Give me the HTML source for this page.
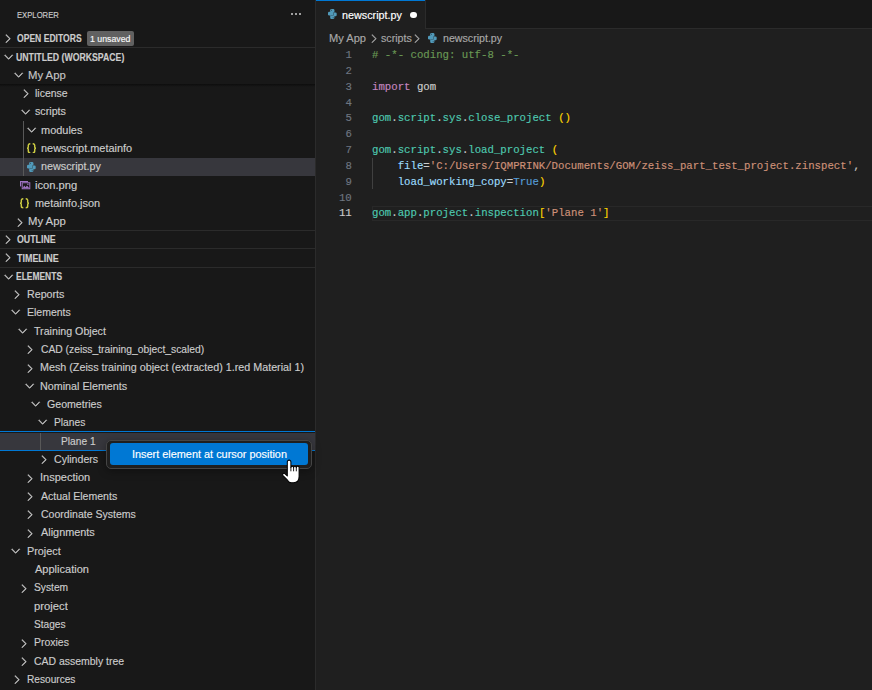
<!DOCTYPE html><html><head><meta charset="utf-8"><style>html,body{margin:0;padding:0;width:872px;height:690px;overflow:hidden;background:#181818;}.t{position:absolute;white-space:pre;line-height:1;}.r{position:absolute;}</style></head><body>
<div class="r" style="left:316.00px;top:0.00px;width:556.00px;height:690.00px;background:#1f1f1f;"></div>
<div class="r" style="left:316.00px;top:0.00px;width:556.00px;height:29.17px;background:#181818;"></div>
<div class="r" style="left:425.00px;top:28.17px;width:447.00px;height:1.00px;background:#2b2b2b;"></div>
<div class="r" style="left:316.00px;top:0.00px;width:109.50px;height:29.17px;background:#1f1f1f;"></div>
<div class="r" style="left:316.00px;top:0.00px;width:109.50px;height:1.20px;background:#0078d4;"></div>
<div class="r" style="left:425.00px;top:0.00px;width:1.00px;height:29.17px;background:#2b2b2b;"></div>
<div class="r" style="left:315.00px;top:0.00px;width:1.00px;height:690.00px;background:#2b2b2b;"></div>
<div class="t" style="left:16.75px;top:10.09px;font-size:9.7px;color:#cccccc;font-weight:normal;font-family:'Liberation Sans', sans-serif;transform:scaleX(0.7927);transform-origin:0 0;-webkit-text-stroke:0.15px currentColor;">EXPLORER</div>
<div class="r" style="left:291.35px;top:13.25px;width:2.10px;height:2.10px;background:#cccccc;border-radius:50%;"></div>
<div class="r" style="left:295.35px;top:13.25px;width:2.10px;height:2.10px;background:#cccccc;border-radius:50%;"></div>
<div class="r" style="left:299.35px;top:13.25px;width:2.10px;height:2.10px;background:#cccccc;border-radius:50%;"></div>
<svg class="r" style="left:1.24px;top:31.87px" width="13.33" height="13.33" viewBox="0 0 16 16"><path fill="#cccccc" stroke="#cccccc" stroke-width="0.6" d="M10.072 8.024L5.715 3.667l.618-.62L11 7.716v.618L6.333 13l-.618-.619 4.357-4.357z"/></svg>
<div class="t" style="left:16.66px;top:34.13px;font-size:10.0px;color:#cccccc;font-weight:bold;font-family:'Liberation Sans', sans-serif;transform:scaleX(0.8577);transform-origin:0 0;-webkit-text-stroke:0.15px currentColor;">OPEN EDITORS</div>
<div class="r" style="left:87.00px;top:31.00px;width:47.00px;height:15.00px;background:#616161;border-radius:2px;"></div>
<div class="t" style="left:90.06px;top:34.17px;font-size:9.6px;color:#f8f8f8;font-weight:normal;font-family:'Liberation Sans', sans-serif;transform:scaleX(0.9126);transform-origin:0 0;-webkit-text-stroke:0.15px currentColor;">1 unsaved</div>
<div class="r" style="left:0.00px;top:47.00px;width:315.00px;height:1.00px;background:#2b2b2b;"></div>
<svg class="r" style="left:1.60px;top:49.50px" width="13.33" height="13.33" viewBox="0 0 16 16"><path fill="#cccccc" stroke="#cccccc" stroke-width="0.6" d="M7.976 10.072l4.357-4.357.62.618L8.284 11h-.618L3 6.333l.619-.618 4.357 4.357z"/></svg>
<div class="t" style="left:16.48px;top:53.03px;font-size:10.0px;color:#cccccc;font-weight:bold;font-family:'Liberation Sans', sans-serif;transform:scaleX(0.8716);transform-origin:0 0;-webkit-text-stroke:0.15px currentColor;">UNTITLED (WORKSPACE)</div>
<div class="r" style="left:0.00px;top:157.50px;width:315.00px;height:18.33px;background:#37373d;"></div>
<div class="r" style="left:23.30px;top:120.83px;width:1.00px;height:55.00px;background:#585858;"></div>
<div class="r" style="left:0.00px;top:84.16px;width:315.00px;height:3.00px;background:linear-gradient(#0d0d0d,rgba(24,24,24,0));"></div>
<svg class="r" style="left:11.70px;top:67.83px" width="13.33" height="13.33" viewBox="0 0 16 16"><path fill="#cccccc" stroke="#cccccc" stroke-width="0.6" d="M7.976 10.072l4.357-4.357.62.618L8.284 11h-.618L3 6.333l.619-.618 4.357 4.357z"/></svg>
<div class="t" style="left:27.85px;top:69.66px;font-size:10.6px;color:#c4c4c4;font-weight:normal;font-family:'Liberation Sans', sans-serif;transform:scaleX(1.0679);transform-origin:0 0;-webkit-text-stroke:0.15px currentColor;">My App</div>
<svg class="r" style="left:19.44px;top:87.46px" width="13.33" height="13.33" viewBox="0 0 16 16"><path fill="#cccccc" stroke="#cccccc" stroke-width="0.6" d="M10.072 8.024L5.715 3.667l.618-.62L11 7.716v.618L6.333 13l-.618-.619 4.357-4.357z"/></svg>
<div class="t" style="left:34.81px;top:87.99px;font-size:10.6px;color:#cccccc;font-weight:normal;font-family:'Liberation Sans', sans-serif;transform:scaleX(0.9874);transform-origin:0 0;-webkit-text-stroke:0.15px currentColor;">license</div>
<svg class="r" style="left:18.50px;top:104.50px" width="13.33" height="13.33" viewBox="0 0 16 16"><path fill="#cccccc" stroke="#cccccc" stroke-width="0.6" d="M7.976 10.072l4.357-4.357.62.618L8.284 11h-.618L3 6.333l.619-.618 4.357 4.357z"/></svg>
<div class="t" style="left:34.80px;top:106.32px;font-size:10.6px;color:#cccccc;font-weight:normal;font-family:'Liberation Sans', sans-serif;transform:scaleX(1.0091);transform-origin:0 0;-webkit-text-stroke:0.15px currentColor;">scripts</div>
<svg class="r" style="left:24.50px;top:122.83px" width="13.33" height="13.33" viewBox="0 0 16 16"><path fill="#cccccc" stroke="#cccccc" stroke-width="0.6" d="M7.976 10.072l4.357-4.357.62.618L8.284 11h-.618L3 6.333l.619-.618 4.357 4.357z"/></svg>
<div class="t" style="left:41.18px;top:124.66px;font-size:10.6px;color:#cccccc;font-weight:normal;font-family:'Liberation Sans', sans-serif;transform:scaleX(1.0342);transform-origin:0 0;-webkit-text-stroke:0.15px currentColor;">modules</div>
<div class="t" style="left:41.18px;top:142.99px;font-size:10.6px;color:#cccccc;font-weight:normal;font-family:'Liberation Sans', sans-serif;transform:scaleX(1.0324);transform-origin:0 0;-webkit-text-stroke:0.15px currentColor;">newscript.metainfo</div>
<svg class="r" style="left:26.80px;top:142.96px" width="9.5" height="10.5" viewBox="0 0 9.5 10.5"><g fill="none" stroke="#cbcb41" stroke-width="1.45" stroke-linejoin="round"><path d="M3.3 0.7 Q1.3 0.7 1.3 2.2 V4.1 Q1.3 5.1 0.3 5.25 Q1.3 5.4 1.3 6.4 V8.3 Q1.3 9.8 3.3 9.8"/><path d="M5.7 0.7 Q7.7 0.7 7.7 2.2 V4.1 Q7.7 5.1 8.9 5.25 Q7.7 5.4 7.7 6.4 V8.3 Q7.7 9.8 5.7 9.8"/></g></svg>
<div class="t" style="left:41.19px;top:161.32px;font-size:10.6px;color:#cccccc;font-weight:normal;font-family:'Liberation Sans', sans-serif;transform:scaleX(1.0187);transform-origin:0 0;-webkit-text-stroke:0.15px currentColor;">newscript.py</div>
<svg class="r" style="left:26.90px;top:161.70px" width="9.00" height="10.00" viewBox="0 0 9 10"><g fill="#519aba"><rect x="2.2" y="0" width="4.2" height="4.2" rx="1.2"/><rect x="0" y="2.7" width="5.8" height="3.7" rx="1.2"/><rect x="2.8" y="3.6" width="5.9" height="3.7" rx="1.2"/><rect x="2.2" y="5.8" width="4.2" height="4.2" rx="1.2"/></g><g fill="#1f1f1f" opacity="0.55"><rect x="3" y="0.8" width="1" height="1"/><rect x="4.7" y="8.2" width="1" height="1"/><path d="M2.8 6.4 L5.8 6.4 L5.8 3.6 L6.4 3.6 L6.4 3.3 L5.2 3.3 L5.2 6 L2.8 6 Z"/></g></svg>
<div class="t" style="left:34.76px;top:179.66px;font-size:10.6px;color:#cccccc;font-weight:normal;font-family:'Liberation Sans', sans-serif;transform:scaleX(1.0546);transform-origin:0 0;-webkit-text-stroke:0.15px currentColor;">icon.png</div>
<svg class="r" style="left:19.60px;top:181.03px" width="11" height="9.5" viewBox="0 0 11 9.5"><g fill="#a074c4"><rect x="0" y="0" width="8" height="1.1"/><rect x="0" y="0" width="1.1" height="5.4"/><path fill-rule="evenodd" d="M1.7 1.2 H10.3 V8.3 H1.7 Z M2.7 2.2 V7.3 H9.3 V2.2 Z"/><path d="M2.7 7.3 L4.2 4.6 L5.6 6.2 L7.0 4.4 L9.3 7.3 Z"/><circle cx="7.9" cy="3.3" r="0.75"/></g></svg>
<div class="t" style="left:34.78px;top:197.99px;font-size:10.6px;color:#cccccc;font-weight:normal;font-family:'Liberation Sans', sans-serif;transform:scaleX(1.0332);transform-origin:0 0;-webkit-text-stroke:0.15px currentColor;">metainfo.json</div>
<svg class="r" style="left:19.90px;top:198.06px" width="9.5" height="10.5" viewBox="0 0 9.5 10.5"><g fill="none" stroke="#cbcb41" stroke-width="1.45" stroke-linejoin="round"><path d="M3.3 0.7 Q1.3 0.7 1.3 2.2 V4.1 Q1.3 5.1 0.3 5.25 Q1.3 5.4 1.3 6.4 V8.3 Q1.3 9.8 3.3 9.8"/><path d="M5.7 0.7 Q7.7 0.7 7.7 2.2 V4.1 Q7.7 5.1 8.9 5.25 Q7.7 5.4 7.7 6.4 V8.3 Q7.7 9.8 5.7 9.8"/></g></svg>
<svg class="r" style="left:12.64px;top:215.80px" width="13.33" height="13.33" viewBox="0 0 16 16"><path fill="#cccccc" stroke="#cccccc" stroke-width="0.6" d="M10.072 8.024L5.715 3.667l.618-.62L11 7.716v.618L6.333 13l-.618-.619 4.357-4.357z"/></svg>
<div class="t" style="left:27.85px;top:216.32px;font-size:10.6px;color:#cccccc;font-weight:normal;font-family:'Liberation Sans', sans-serif;transform:scaleX(1.0679);transform-origin:0 0;-webkit-text-stroke:0.15px currentColor;">My App</div>
<div class="r" style="left:0.00px;top:230.00px;width:315.00px;height:1.00px;background:#2b2b2b;"></div>
<svg class="r" style="left:1.24px;top:232.70px" width="13.33" height="13.33" viewBox="0 0 16 16"><path fill="#cccccc" stroke="#cccccc" stroke-width="0.6" d="M10.072 8.024L5.715 3.667l.618-.62L11 7.716v.618L6.333 13l-.618-.619 4.357-4.357z"/></svg>
<div class="t" style="left:16.65px;top:235.24px;font-size:10.0px;color:#cccccc;font-weight:bold;font-family:'Liberation Sans', sans-serif;transform:scaleX(0.8813);transform-origin:0 0;-webkit-text-stroke:0.15px currentColor;">OUTLINE</div>
<div class="r" style="left:0.00px;top:248.00px;width:315.00px;height:1.00px;background:#2b2b2b;"></div>
<svg class="r" style="left:1.24px;top:250.70px" width="13.33" height="13.33" viewBox="0 0 16 16"><path fill="#cccccc" stroke="#cccccc" stroke-width="0.6" d="M10.072 8.024L5.715 3.667l.618-.62L11 7.716v.618L6.333 13l-.618-.619 4.357-4.357z"/></svg>
<div class="t" style="left:16.91px;top:254.34px;font-size:10.0px;color:#cccccc;font-weight:bold;font-family:'Liberation Sans', sans-serif;transform:scaleX(0.8940);transform-origin:0 0;-webkit-text-stroke:0.15px currentColor;">TIMELINE</div>
<div class="r" style="left:0.00px;top:267.00px;width:315.00px;height:1.00px;background:#2b2b2b;"></div>
<svg class="r" style="left:1.60px;top:269.50px" width="13.33" height="13.33" viewBox="0 0 16 16"><path fill="#cccccc" stroke="#cccccc" stroke-width="0.6" d="M7.976 10.072l4.357-4.357.62.618L8.284 11h-.618L3 6.333l.619-.618 4.357 4.357z"/></svg>
<div class="t" style="left:16.49px;top:272.44px;font-size:10.0px;color:#cccccc;font-weight:bold;font-family:'Liberation Sans', sans-serif;transform:scaleX(0.8452);transform-origin:0 0;-webkit-text-stroke:0.15px currentColor;">ELEMENTS</div>
<div class="r" style="left:0.00px;top:432.50px;width:315.00px;height:18.33px;background:#37373d;"></div>
<div class="r" style="left:0.00px;top:431.30px;width:315.00px;height:1.20px;background:#0078d4;"></div>
<div class="r" style="left:0.00px;top:449.63px;width:315.00px;height:1.20px;background:#0078d4;"></div>
<div class="r" style="left:40.30px;top:432.50px;width:1.00px;height:17.13px;background:#585858;"></div>
<svg class="r" style="left:9.80px;top:288.33px" width="13.33" height="13.33" viewBox="0 0 16 16"><path fill="#cccccc" stroke="#cccccc" stroke-width="0.6" d="M10.072 8.024L5.715 3.667l.618-.62L11 7.716v.618L6.333 13l-.618-.619 4.357-4.357z"/></svg>
<div class="t" style="left:26.99px;top:288.86px;font-size:10.6px;color:#cccccc;font-weight:normal;font-family:'Liberation Sans', sans-serif;transform:scaleX(1.0079);transform-origin:0 0;-webkit-text-stroke:0.15px currentColor;">Reports</div>
<svg class="r" style="left:9.20px;top:305.36px" width="13.33" height="13.33" viewBox="0 0 16 16"><path fill="#cccccc" stroke="#cccccc" stroke-width="0.6" d="M7.976 10.072l4.357-4.357.62.618L8.284 11h-.618L3 6.333l.619-.618 4.357 4.357z"/></svg>
<div class="t" style="left:27.01px;top:307.19px;font-size:10.6px;color:#cccccc;font-weight:normal;font-family:'Liberation Sans', sans-serif;transform:scaleX(0.9910);transform-origin:0 0;-webkit-text-stroke:0.15px currentColor;">Elements</div>
<svg class="r" style="left:15.90px;top:323.70px" width="13.33" height="13.33" viewBox="0 0 16 16"><path fill="#cccccc" stroke="#cccccc" stroke-width="0.6" d="M7.976 10.072l4.357-4.357.62.618L8.284 11h-.618L3 6.333l.619-.618 4.357 4.357z"/></svg>
<div class="t" style="left:34.30px;top:325.52px;font-size:10.6px;color:#cccccc;font-weight:normal;font-family:'Liberation Sans', sans-serif;transform:scaleX(1.0065);transform-origin:0 0;-webkit-text-stroke:0.15px currentColor;">Training Object</div>
<svg class="r" style="left:23.20px;top:343.33px" width="13.33" height="13.33" viewBox="0 0 16 16"><path fill="#cccccc" stroke="#cccccc" stroke-width="0.6" d="M10.072 8.024L5.715 3.667l.618-.62L11 7.716v.618L6.333 13l-.618-.619 4.357-4.357z"/></svg>
<div class="t" style="left:40.71px;top:343.86px;font-size:10.6px;color:#cccccc;font-weight:normal;font-family:'Liberation Sans', sans-serif;transform:scaleX(0.9725);transform-origin:0 0;-webkit-text-stroke:0.15px currentColor;">CAD (zeiss_training_object_scaled)</div>
<svg class="r" style="left:23.20px;top:361.66px" width="13.33" height="13.33" viewBox="0 0 16 16"><path fill="#cccccc" stroke="#cccccc" stroke-width="0.6" d="M10.072 8.024L5.715 3.667l.618-.62L11 7.716v.618L6.333 13l-.618-.619 4.357-4.357z"/></svg>
<div class="t" style="left:40.39px;top:362.19px;font-size:10.6px;color:#cccccc;font-weight:normal;font-family:'Liberation Sans', sans-serif;transform:scaleX(1.0144);transform-origin:0 0;-webkit-text-stroke:0.15px currentColor;">Mesh (Zeiss training object (extracted) 1.red Material 1)</div>
<svg class="r" style="left:22.60px;top:378.70px" width="13.33" height="13.33" viewBox="0 0 16 16"><path fill="#cccccc" stroke="#cccccc" stroke-width="0.6" d="M7.976 10.072l4.357-4.357.62.618L8.284 11h-.618L3 6.333l.619-.618 4.357 4.357z"/></svg>
<div class="t" style="left:40.39px;top:380.52px;font-size:10.6px;color:#cccccc;font-weight:normal;font-family:'Liberation Sans', sans-serif;transform:scaleX(1.0140);transform-origin:0 0;-webkit-text-stroke:0.15px currentColor;">Nominal Elements</div>
<svg class="r" style="left:29.30px;top:397.03px" width="13.33" height="13.33" viewBox="0 0 16 16"><path fill="#cccccc" stroke="#cccccc" stroke-width="0.6" d="M7.976 10.072l4.357-4.357.62.618L8.284 11h-.618L3 6.333l.619-.618 4.357 4.357z"/></svg>
<div class="t" style="left:47.40px;top:398.86px;font-size:10.6px;color:#cccccc;font-weight:normal;font-family:'Liberation Sans', sans-serif;transform:scaleX(1.0003);transform-origin:0 0;-webkit-text-stroke:0.15px currentColor;">Geometries</div>
<svg class="r" style="left:36.00px;top:415.36px" width="13.33" height="13.33" viewBox="0 0 16 16"><path fill="#cccccc" stroke="#cccccc" stroke-width="0.6" d="M7.976 10.072l4.357-4.357.62.618L8.284 11h-.618L3 6.333l.619-.618 4.357 4.357z"/></svg>
<div class="t" style="left:53.83px;top:417.19px;font-size:10.6px;color:#cccccc;font-weight:normal;font-family:'Liberation Sans', sans-serif;transform:scaleX(0.9645);transform-origin:0 0;-webkit-text-stroke:0.15px currentColor;">Planes</div>
<div class="t" style="left:60.53px;top:435.52px;font-size:10.6px;color:#cccccc;font-weight:normal;font-family:'Liberation Sans', sans-serif;transform:scaleX(0.9638);transform-origin:0 0;-webkit-text-stroke:0.15px currentColor;">Plane 1</div>
<svg class="r" style="left:36.60px;top:453.33px" width="13.33" height="13.33" viewBox="0 0 16 16"><path fill="#cccccc" stroke="#cccccc" stroke-width="0.6" d="M10.072 8.024L5.715 3.667l.618-.62L11 7.716v.618L6.333 13l-.618-.619 4.357-4.357z"/></svg>
<div class="t" style="left:54.10px;top:453.86px;font-size:10.6px;color:#cccccc;font-weight:normal;font-family:'Liberation Sans', sans-serif;transform:scaleX(0.9981);transform-origin:0 0;-webkit-text-stroke:0.15px currentColor;">Cylinders</div>
<svg class="r" style="left:23.20px;top:471.67px" width="13.33" height="13.33" viewBox="0 0 16 16"><path fill="#cccccc" stroke="#cccccc" stroke-width="0.6" d="M10.072 8.024L5.715 3.667l.618-.62L11 7.716v.618L6.333 13l-.618-.619 4.357-4.357z"/></svg>
<div class="t" style="left:40.27px;top:472.19px;font-size:10.6px;color:#cccccc;font-weight:normal;font-family:'Liberation Sans', sans-serif;transform:scaleX(1.0379);transform-origin:0 0;-webkit-text-stroke:0.15px currentColor;">Inspection</div>
<svg class="r" style="left:23.20px;top:490.00px" width="13.33" height="13.33" viewBox="0 0 16 16"><path fill="#cccccc" stroke="#cccccc" stroke-width="0.6" d="M10.072 8.024L5.715 3.667l.618-.62L11 7.716v.618L6.333 13l-.618-.619 4.357-4.357z"/></svg>
<div class="t" style="left:41.20px;top:490.52px;font-size:10.6px;color:#cccccc;font-weight:normal;font-family:'Liberation Sans', sans-serif;transform:scaleX(0.9949);transform-origin:0 0;-webkit-text-stroke:0.15px currentColor;">Actual Elements</div>
<svg class="r" style="left:23.20px;top:508.33px" width="13.33" height="13.33" viewBox="0 0 16 16"><path fill="#cccccc" stroke="#cccccc" stroke-width="0.6" d="M10.072 8.024L5.715 3.667l.618-.62L11 7.716v.618L6.333 13l-.618-.619 4.357-4.357z"/></svg>
<div class="t" style="left:40.70px;top:508.86px;font-size:10.6px;color:#cccccc;font-weight:normal;font-family:'Liberation Sans', sans-serif;transform:scaleX(0.9943);transform-origin:0 0;-webkit-text-stroke:0.15px currentColor;">Coordinate Systems</div>
<svg class="r" style="left:23.20px;top:526.67px" width="13.33" height="13.33" viewBox="0 0 16 16"><path fill="#cccccc" stroke="#cccccc" stroke-width="0.6" d="M10.072 8.024L5.715 3.667l.618-.62L11 7.716v.618L6.333 13l-.618-.619 4.357-4.357z"/></svg>
<div class="t" style="left:41.20px;top:527.19px;font-size:10.6px;color:#cccccc;font-weight:normal;font-family:'Liberation Sans', sans-serif;transform:scaleX(1.0262);transform-origin:0 0;-webkit-text-stroke:0.15px currentColor;">Alignments</div>
<svg class="r" style="left:9.20px;top:543.70px" width="13.33" height="13.33" viewBox="0 0 16 16"><path fill="#cccccc" stroke="#cccccc" stroke-width="0.6" d="M7.976 10.072l4.357-4.357.62.618L8.284 11h-.618L3 6.333l.619-.618 4.357 4.357z"/></svg>
<div class="t" style="left:26.98px;top:545.52px;font-size:10.6px;color:#cccccc;font-weight:normal;font-family:'Liberation Sans', sans-serif;transform:scaleX(1.0235);transform-origin:0 0;-webkit-text-stroke:0.15px currentColor;">Project</div>
<div class="t" style="left:34.50px;top:563.86px;font-size:10.6px;color:#cccccc;font-weight:normal;font-family:'Liberation Sans', sans-serif;transform:scaleX(1.0398);transform-origin:0 0;-webkit-text-stroke:0.15px currentColor;">Application</div>
<svg class="r" style="left:16.50px;top:581.67px" width="13.33" height="13.33" viewBox="0 0 16 16"><path fill="#cccccc" stroke="#cccccc" stroke-width="0.6" d="M10.072 8.024L5.715 3.667l.618-.62L11 7.716v.618L6.333 13l-.618-.619 4.357-4.357z"/></svg>
<div class="t" style="left:34.11px;top:582.19px;font-size:10.6px;color:#cccccc;font-weight:normal;font-family:'Liberation Sans', sans-serif;transform:scaleX(0.9647);transform-origin:0 0;-webkit-text-stroke:0.15px currentColor;">System</div>
<div class="t" style="left:33.86px;top:600.52px;font-size:10.6px;color:#cccccc;font-weight:normal;font-family:'Liberation Sans', sans-serif;transform:scaleX(1.0619);transform-origin:0 0;-webkit-text-stroke:0.15px currentColor;">project</div>
<div class="t" style="left:34.12px;top:618.86px;font-size:10.6px;color:#cccccc;font-weight:normal;font-family:'Liberation Sans', sans-serif;transform:scaleX(0.9566);transform-origin:0 0;-webkit-text-stroke:0.15px currentColor;">Stages</div>
<svg class="r" style="left:16.50px;top:636.67px" width="13.33" height="13.33" viewBox="0 0 16 16"><path fill="#cccccc" stroke="#cccccc" stroke-width="0.6" d="M10.072 8.024L5.715 3.667l.618-.62L11 7.716v.618L6.333 13l-.618-.619 4.357-4.357z"/></svg>
<div class="t" style="left:33.71px;top:637.19px;font-size:10.6px;color:#cccccc;font-weight:normal;font-family:'Liberation Sans', sans-serif;transform:scaleX(0.9870);transform-origin:0 0;-webkit-text-stroke:0.15px currentColor;">Proxies</div>
<svg class="r" style="left:16.50px;top:655.00px" width="13.33" height="13.33" viewBox="0 0 16 16"><path fill="#cccccc" stroke="#cccccc" stroke-width="0.6" d="M10.072 8.024L5.715 3.667l.618-.62L11 7.716v.618L6.333 13l-.618-.619 4.357-4.357z"/></svg>
<div class="t" style="left:34.01px;top:655.52px;font-size:10.6px;color:#cccccc;font-weight:normal;font-family:'Liberation Sans', sans-serif;transform:scaleX(0.9866);transform-origin:0 0;-webkit-text-stroke:0.15px currentColor;">CAD assembly tree</div>
<svg class="r" style="left:9.80px;top:673.33px" width="13.33" height="13.33" viewBox="0 0 16 16"><path fill="#cccccc" stroke="#cccccc" stroke-width="0.6" d="M10.072 8.024L5.715 3.667l.618-.62L11 7.716v.618L6.333 13l-.618-.619 4.357-4.357z"/></svg>
<div class="t" style="left:27.03px;top:673.86px;font-size:10.6px;color:#cccccc;font-weight:normal;font-family:'Liberation Sans', sans-serif;transform:scaleX(0.9563);transform-origin:0 0;-webkit-text-stroke:0.15px currentColor;">Resources</div>
<div class="t" style="left:328.96px;top:32.93px;font-size:10.6px;color:#a9a9a9;font-weight:normal;font-family:'Liberation Sans', sans-serif;transform:scaleX(1.0478);transform-origin:0 0;-webkit-text-stroke:0.15px currentColor;">My App</div>
<svg class="r" style="left:366.94px;top:31.50px" width="13.33" height="13.33" viewBox="0 0 16 16"><path fill="#a9a9a9" stroke="#a9a9a9" stroke-width="0.6" d="M10.072 8.024L5.715 3.667l.618-.62L11 7.716v.618L6.333 13l-.618-.619 4.357-4.357z"/></svg>
<div class="t" style="left:380.50px;top:32.93px;font-size:10.6px;color:#a9a9a9;font-weight:normal;font-family:'Liberation Sans', sans-serif;transform:scaleX(1.0058);transform-origin:0 0;-webkit-text-stroke:0.15px currentColor;">scripts</div>
<svg class="r" style="left:410.24px;top:31.50px" width="13.33" height="13.33" viewBox="0 0 16 16"><path fill="#a9a9a9" stroke="#a9a9a9" stroke-width="0.6" d="M10.072 8.024L5.715 3.667l.618-.62L11 7.716v.618L6.333 13l-.618-.619 4.357-4.357z"/></svg>
<svg class="r" style="left:427.80px;top:33.30px" width="9.00" height="10.00" viewBox="0 0 9 10"><g fill="#519aba"><rect x="2.2" y="0" width="4.2" height="4.2" rx="1.2"/><rect x="0" y="2.7" width="5.8" height="3.7" rx="1.2"/><rect x="2.8" y="3.6" width="5.9" height="3.7" rx="1.2"/><rect x="2.2" y="5.8" width="4.2" height="4.2" rx="1.2"/></g><g fill="#1f1f1f" opacity="0.55"><rect x="3" y="0.8" width="1" height="1"/><rect x="4.7" y="8.2" width="1" height="1"/><path d="M2.8 6.4 L5.8 6.4 L5.8 3.6 L6.4 3.6 L6.4 3.3 L5.2 3.3 L5.2 6 L2.8 6 Z"/></g></svg>
<div class="t" style="left:442.60px;top:32.93px;font-size:10.6px;color:#a9a9a9;font-weight:normal;font-family:'Liberation Sans', sans-serif;transform:scaleX(1.0033);transform-origin:0 0;-webkit-text-stroke:0.15px currentColor;">newscript.py</div>
<div class="t" style="left:342.09px;top:9.63px;font-size:10.6px;color:#ffffff;font-weight:normal;font-family:'Liberation Sans', sans-serif;transform:scaleX(1.0170);transform-origin:0 0;-webkit-text-stroke:0.15px currentColor;">newscript.py</div>
<svg class="r" style="left:327.70px;top:9.00px" width="9.00" height="10.00" viewBox="0 0 9 10"><g fill="#519aba"><rect x="2.2" y="0" width="4.2" height="4.2" rx="1.2"/><rect x="0" y="2.7" width="5.8" height="3.7" rx="1.2"/><rect x="2.8" y="3.6" width="5.9" height="3.7" rx="1.2"/><rect x="2.2" y="5.8" width="4.2" height="4.2" rx="1.2"/></g><g fill="#1f1f1f" opacity="0.55"><rect x="3" y="0.8" width="1" height="1"/><rect x="4.7" y="8.2" width="1" height="1"/><path d="M2.8 6.4 L5.8 6.4 L5.8 3.6 L6.4 3.6 L6.4 3.3 L5.2 3.3 L5.2 6 L2.8 6 Z"/></g></svg>
<div class="r" style="left:410.30px;top:11.50px;width:6.80px;height:6.80px;background:#ffffff;border-radius:50%;"></div>
<div class="r" style="left:372.00px;top:205.50px;width:500.00px;height:15.00px;background:transparent;border:1.5px solid #282828;border-right:none;box-sizing:border-box;"></div>
<div class="r" style="left:372.20px;top:157.90px;width:1.00px;height:31.00px;background:#404040;"></div>
<div class="t" style="left:345.38px;top:50.10px;font-size:10.7px;color:#6e7681;font-weight:normal;font-family:'Liberation Mono', monospace;-webkit-text-stroke:0.15px currentColor;">1</div>
<div class="t" style="left:372.00px;top:50.10px;font-size:10.7px;color:#6a9955;font-weight:normal;font-family:'Liberation Mono', monospace;-webkit-text-stroke:0.15px currentColor;"># -*- coding: utf-8 -*-</div>
<div class="t" style="left:345.38px;top:65.93px;font-size:10.7px;color:#6e7681;font-weight:normal;font-family:'Liberation Mono', monospace;-webkit-text-stroke:0.15px currentColor;">2</div>
<div class="t" style="left:345.38px;top:81.77px;font-size:10.7px;color:#6e7681;font-weight:normal;font-family:'Liberation Mono', monospace;-webkit-text-stroke:0.15px currentColor;">3</div>
<div class="t" style="left:372.00px;top:81.77px;font-size:10.7px;color:#c586c0;font-weight:normal;font-family:'Liberation Mono', monospace;-webkit-text-stroke:0.15px currentColor;">import</div>
<div class="t" style="left:410.52px;top:81.77px;font-size:10.7px;color:#cccccc;font-weight:normal;font-family:'Liberation Mono', monospace;-webkit-text-stroke:0.15px currentColor;"> gom</div>
<div class="t" style="left:345.38px;top:97.60px;font-size:10.7px;color:#6e7681;font-weight:normal;font-family:'Liberation Mono', monospace;-webkit-text-stroke:0.15px currentColor;">4</div>
<div class="t" style="left:345.38px;top:113.43px;font-size:10.7px;color:#6e7681;font-weight:normal;font-family:'Liberation Mono', monospace;-webkit-text-stroke:0.15px currentColor;">5</div>
<div class="t" style="left:372.00px;top:113.43px;font-size:10.7px;color:#4ec9b0;font-weight:normal;font-family:'Liberation Mono', monospace;-webkit-text-stroke:0.15px currentColor;">gom</div>
<div class="t" style="left:391.26px;top:113.43px;font-size:10.7px;color:#cccccc;font-weight:normal;font-family:'Liberation Mono', monospace;-webkit-text-stroke:0.15px currentColor;">.</div>
<div class="t" style="left:397.68px;top:113.43px;font-size:10.7px;color:#4ec9b0;font-weight:normal;font-family:'Liberation Mono', monospace;-webkit-text-stroke:0.15px currentColor;">script</div>
<div class="t" style="left:436.20px;top:113.43px;font-size:10.7px;color:#cccccc;font-weight:normal;font-family:'Liberation Mono', monospace;-webkit-text-stroke:0.15px currentColor;">.</div>
<div class="t" style="left:442.62px;top:113.43px;font-size:10.7px;color:#4ec9b0;font-weight:normal;font-family:'Liberation Mono', monospace;-webkit-text-stroke:0.15px currentColor;">sys</div>
<div class="t" style="left:461.88px;top:113.43px;font-size:10.7px;color:#cccccc;font-weight:normal;font-family:'Liberation Mono', monospace;-webkit-text-stroke:0.15px currentColor;">.</div>
<div class="t" style="left:468.30px;top:113.43px;font-size:10.7px;color:#4ec9b0;font-weight:normal;font-family:'Liberation Mono', monospace;-webkit-text-stroke:0.15px currentColor;">close_project</div>
<div class="t" style="left:551.76px;top:113.43px;font-size:10.7px;color:#cccccc;font-weight:normal;font-family:'Liberation Mono', monospace;-webkit-text-stroke:0.15px currentColor;"> </div>
<div class="t" style="left:558.18px;top:113.43px;font-size:10.7px;color:#ffd700;font-weight:normal;font-family:'Liberation Mono', monospace;-webkit-text-stroke:0.15px currentColor;">()</div>
<div class="t" style="left:345.38px;top:129.27px;font-size:10.7px;color:#6e7681;font-weight:normal;font-family:'Liberation Mono', monospace;-webkit-text-stroke:0.15px currentColor;">6</div>
<div class="t" style="left:345.38px;top:145.10px;font-size:10.7px;color:#6e7681;font-weight:normal;font-family:'Liberation Mono', monospace;-webkit-text-stroke:0.15px currentColor;">7</div>
<div class="t" style="left:372.00px;top:145.10px;font-size:10.7px;color:#4ec9b0;font-weight:normal;font-family:'Liberation Mono', monospace;-webkit-text-stroke:0.15px currentColor;">gom</div>
<div class="t" style="left:391.26px;top:145.10px;font-size:10.7px;color:#cccccc;font-weight:normal;font-family:'Liberation Mono', monospace;-webkit-text-stroke:0.15px currentColor;">.</div>
<div class="t" style="left:397.68px;top:145.10px;font-size:10.7px;color:#4ec9b0;font-weight:normal;font-family:'Liberation Mono', monospace;-webkit-text-stroke:0.15px currentColor;">script</div>
<div class="t" style="left:436.20px;top:145.10px;font-size:10.7px;color:#cccccc;font-weight:normal;font-family:'Liberation Mono', monospace;-webkit-text-stroke:0.15px currentColor;">.</div>
<div class="t" style="left:442.62px;top:145.10px;font-size:10.7px;color:#4ec9b0;font-weight:normal;font-family:'Liberation Mono', monospace;-webkit-text-stroke:0.15px currentColor;">sys</div>
<div class="t" style="left:461.88px;top:145.10px;font-size:10.7px;color:#cccccc;font-weight:normal;font-family:'Liberation Mono', monospace;-webkit-text-stroke:0.15px currentColor;">.</div>
<div class="t" style="left:468.30px;top:145.10px;font-size:10.7px;color:#4ec9b0;font-weight:normal;font-family:'Liberation Mono', monospace;-webkit-text-stroke:0.15px currentColor;">load_project</div>
<div class="t" style="left:545.34px;top:145.10px;font-size:10.7px;color:#cccccc;font-weight:normal;font-family:'Liberation Mono', monospace;-webkit-text-stroke:0.15px currentColor;"> </div>
<div class="t" style="left:551.76px;top:145.10px;font-size:10.7px;color:#ffd700;font-weight:normal;font-family:'Liberation Mono', monospace;-webkit-text-stroke:0.15px currentColor;">(</div>
<div class="t" style="left:345.38px;top:160.93px;font-size:10.7px;color:#6e7681;font-weight:normal;font-family:'Liberation Mono', monospace;-webkit-text-stroke:0.15px currentColor;">8</div>
<div class="t" style="left:372.00px;top:160.93px;font-size:10.7px;color:#cccccc;font-weight:normal;font-family:'Liberation Mono', monospace;-webkit-text-stroke:0.15px currentColor;">    </div>
<div class="t" style="left:397.68px;top:160.93px;font-size:10.7px;color:#9cdcfe;font-weight:normal;font-family:'Liberation Mono', monospace;-webkit-text-stroke:0.15px currentColor;">file</div>
<div class="t" style="left:423.36px;top:160.93px;font-size:10.7px;color:#cccccc;font-weight:normal;font-family:'Liberation Mono', monospace;-webkit-text-stroke:0.15px currentColor;">=</div>
<div class="t" style="left:429.78px;top:160.93px;font-size:10.7px;color:#ce9178;font-weight:normal;font-family:'Liberation Mono', monospace;-webkit-text-stroke:0.15px currentColor;">'C:/Users/IQMPRINK/Documents/GOM/zeiss_part_test_project.zinspect'</div>
<div class="t" style="left:853.50px;top:160.93px;font-size:10.7px;color:#cccccc;font-weight:normal;font-family:'Liberation Mono', monospace;-webkit-text-stroke:0.15px currentColor;">,</div>
<div class="t" style="left:345.38px;top:176.77px;font-size:10.7px;color:#6e7681;font-weight:normal;font-family:'Liberation Mono', monospace;-webkit-text-stroke:0.15px currentColor;">9</div>
<div class="t" style="left:372.00px;top:176.77px;font-size:10.7px;color:#cccccc;font-weight:normal;font-family:'Liberation Mono', monospace;-webkit-text-stroke:0.15px currentColor;">    </div>
<div class="t" style="left:397.68px;top:176.77px;font-size:10.7px;color:#9cdcfe;font-weight:normal;font-family:'Liberation Mono', monospace;-webkit-text-stroke:0.15px currentColor;">load_working_copy</div>
<div class="t" style="left:506.82px;top:176.77px;font-size:10.7px;color:#cccccc;font-weight:normal;font-family:'Liberation Mono', monospace;-webkit-text-stroke:0.15px currentColor;">=</div>
<div class="t" style="left:513.24px;top:176.77px;font-size:10.7px;color:#569cd6;font-weight:normal;font-family:'Liberation Mono', monospace;-webkit-text-stroke:0.15px currentColor;">True</div>
<div class="t" style="left:538.92px;top:176.77px;font-size:10.7px;color:#ffd700;font-weight:normal;font-family:'Liberation Mono', monospace;-webkit-text-stroke:0.15px currentColor;">)</div>
<div class="t" style="left:338.96px;top:192.60px;font-size:10.7px;color:#6e7681;font-weight:normal;font-family:'Liberation Mono', monospace;-webkit-text-stroke:0.15px currentColor;">10</div>
<div class="t" style="left:338.96px;top:208.43px;font-size:10.7px;color:#cccccc;font-weight:normal;font-family:'Liberation Mono', monospace;-webkit-text-stroke:0.15px currentColor;">11</div>
<div class="t" style="left:372.00px;top:208.43px;font-size:10.7px;color:#4ec9b0;font-weight:normal;font-family:'Liberation Mono', monospace;-webkit-text-stroke:0.15px currentColor;">gom</div>
<div class="t" style="left:391.26px;top:208.43px;font-size:10.7px;color:#cccccc;font-weight:normal;font-family:'Liberation Mono', monospace;-webkit-text-stroke:0.15px currentColor;">.</div>
<div class="t" style="left:397.68px;top:208.43px;font-size:10.7px;color:#4ec9b0;font-weight:normal;font-family:'Liberation Mono', monospace;-webkit-text-stroke:0.15px currentColor;">app</div>
<div class="t" style="left:416.94px;top:208.43px;font-size:10.7px;color:#cccccc;font-weight:normal;font-family:'Liberation Mono', monospace;-webkit-text-stroke:0.15px currentColor;">.</div>
<div class="t" style="left:423.36px;top:208.43px;font-size:10.7px;color:#4ec9b0;font-weight:normal;font-family:'Liberation Mono', monospace;-webkit-text-stroke:0.15px currentColor;">project</div>
<div class="t" style="left:468.30px;top:208.43px;font-size:10.7px;color:#cccccc;font-weight:normal;font-family:'Liberation Mono', monospace;-webkit-text-stroke:0.15px currentColor;">.</div>
<div class="t" style="left:474.72px;top:208.43px;font-size:10.7px;color:#4ec9b0;font-weight:normal;font-family:'Liberation Mono', monospace;-webkit-text-stroke:0.15px currentColor;">inspection</div>
<div class="t" style="left:538.92px;top:208.43px;font-size:10.7px;color:#ffd700;font-weight:normal;font-family:'Liberation Mono', monospace;-webkit-text-stroke:0.15px currentColor;">[</div>
<div class="t" style="left:545.34px;top:208.43px;font-size:10.7px;color:#ce9178;font-weight:normal;font-family:'Liberation Mono', monospace;-webkit-text-stroke:0.15px currentColor;">'Plane 1'</div>
<div class="t" style="left:603.12px;top:208.43px;font-size:10.7px;color:#ffd700;font-weight:normal;font-family:'Liberation Mono', monospace;-webkit-text-stroke:0.15px currentColor;">]</div>
<div class="r" style="left:106.00px;top:439.50px;width:205.50px;height:29.00px;background:#1f1f1f;border:1px solid #454545;border-radius:5px;box-sizing:border-box;box-shadow:0 2px 8px rgba(0,0,0,0.36);"></div>
<div class="r" style="left:109.80px;top:442.80px;width:198.40px;height:22.00px;background:#0078d4;border-radius:3px;"></div>
<div class="t" style="left:131.57px;top:449.03px;font-size:10.6px;color:#ffffff;font-weight:normal;font-family:'Liberation Sans', sans-serif;transform:scaleX(1.0279);transform-origin:0 0;-webkit-text-stroke:0.15px currentColor;">Insert element at cursor position</div>
<svg class="r" style="left:282.00px;top:459.00px;overflow:visible" width="19" height="25" viewBox="0 0 19 25"><path fill="#ffffff" stroke="#000000" stroke-width="1.05" stroke-linejoin="round" d="M5.3 2.9 a1.8 1.8 0 0 1 3.6 0 V8.5 a1.35 1.35 0 0 1 2.7 0 a1.35 1.35 0 0 1 2.7 0 a1.4 1.4 0 0 1 2.8 0 V17.6 q0 6.2 -5.6 6.2 h-2.2 q-2.2 0 -3.8 -2.6 L1 16.6 a1.35 1.35 0 0 1 2.1 -1.8 L5.3 17 Z"/><path stroke="#000000" stroke-width="0.9" d="M8.9 8.3 V12.3 M11.6 8.3 V12.3 M14.3 8.3 V12.3"/></svg>
</body></html>
